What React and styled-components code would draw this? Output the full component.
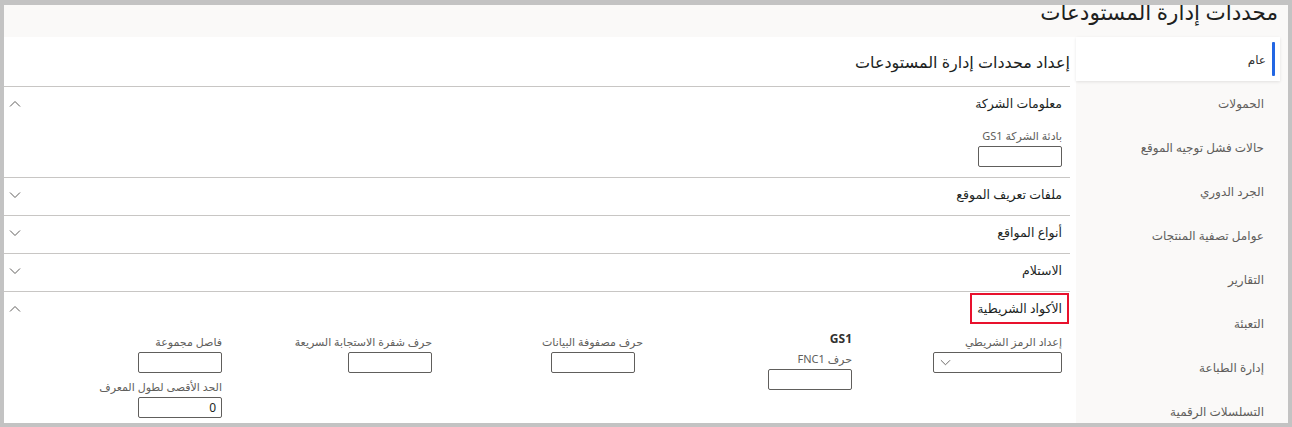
import React from 'react';
import styled, { createGlobalStyle } from 'styled-components';

const Global = createGlobalStyle`
  html, body { margin: 0; padding: 0; }
  body {
    font-family: "Noto Sans", "DejaVu Sans", sans-serif;
    background: #c3c3c3;
  }
`;

const Frame = styled.div`
  box-sizing: border-box;
  width: 1292px;
  height: 427px;
  border-style: solid;
  border-color: #c3c3c3;
  border-width: 5px 4px 4px 4px;
  overflow: hidden;
  direction: rtl;
  background: #faf9f8;
  display: flex;
  flex-direction: column;
`;

const PageHeader = styled.header`
  height: 32px;
  flex: none;
  padding-right: 10px;
  display: flex;
  align-items: flex-end;
`;

const PageTitle = styled.h1`
  margin: 0 0 14px 0;
  font-size: 21.5px;
  font-weight: 400;
  line-height: 22px;
  color: #201f1e;
  white-space: nowrap;
`;

const Body = styled.div`
  flex: 1;
  min-height: 0;
  display: flex;
`;

const Nav = styled.nav`
  width: 212px;
  flex: none;
  background: #faf9f8;
  display: flex;
  flex-direction: column;
`;

const NavItem = styled.div`
  position: relative;
  height: 44px;
  flex: none;
  display: flex;
  align-items: center;
  padding-right: ${p => (p.$active ? '14px' : '24px')};
  margin-right: ${p => (p.$active ? '8px' : '0')};
  background: ${p => (p.$active ? '#ffffff' : 'transparent')};
  box-shadow: ${p => (p.$active ? '0 1px 3px rgba(0,0,0,0.10)' : 'none')};
  font-size: 12px;
  color: ${p => (p.$active ? '#323130' : '#605e5c')};
  white-space: nowrap;
  &::after {
    content: '';
    display: ${p => (p.$active ? 'block' : 'none')};
    position: absolute;
    right: 5px;
    top: 5px;
    bottom: 5px;
    width: 3px;
    border-radius: 1px;
    background: #2266e3;
  }
`;

const Content = styled.main`
  flex: 1;
  min-width: 0;
  background: #ffffff;
  padding-right: 6px;
  display: flex;
  flex-direction: column;
`;

const ContentTitle = styled.h2`
  margin: 0;
  height: 49px;
  flex: none;
  display: flex;
  align-items: center;
  font-size: 16px;
  font-weight: 400;
  color: #201f1e;
  border-bottom: 1px solid #c8c6c4;
  white-space: nowrap;
`;

const Section = styled.section`
  border-bottom: 1px solid #c8c6c4;
  flex: none;
`;

const SectionHeader = styled.div`
  box-sizing: border-box;
  height: 37px;
  display: flex;
  align-items: center;
  justify-content: space-between;
  padding: 0 8px 4px 5px;
`;

const SectionTitle = styled.span`
  font-size: 12.5px;
  font-weight: 400;
  color: #201f1e;
  white-space: nowrap;
  outline: ${p => (p.$marked ? '2px solid #e8112d' : 'none')};
  outline-offset: ${p => (p.$marked ? '5px' : '0')};
`;

const ChevronBox = styled.span`
  display: flex;
  align-items: center;
  width: 12px;
  height: 12px;
`;

const Fields = styled.div`
  display: grid;
  grid-template-columns: repeat(5, 210px);
  align-items: start;
  padding: ${p => p.$pad || '0 8px 12px 0'};
`;

const Field = styled.div`
  display: flex;
  flex-direction: column;
  align-items: ${p => (p.$center ? 'center' : 'flex-start')};
  width: ${p => (p.$center ? '99px' : 'auto')};
`;

const Stack = styled.div`
  display: flex;
  flex-direction: column;
  align-items: flex-start;
  gap: 6px;
`;

const Group = styled.div`
  font-size: 12px;
  font-weight: 700;
  color: #323130;
  line-height: 16px;
  margin-top: -3px;
  margin-bottom: 4px;
`;

const Label = styled.label`
  font-size: 11px;
  color: #605e5c;
  line-height: 16px;
  height: 16px;
  margin-bottom: 2px;
  white-space: nowrap;
`;

const Input = styled.div`
  box-sizing: border-box;
  width: 84px;
  height: 21px;
  border: 1px solid #605e5c;
  border-radius: 2px;
  background: #fff;
  display: flex;
  align-items: center;
  padding: 0 5px;
  font-size: 12px;
  color: #201f1e;
`;

const Select = styled(Input)`
  width: 129px;
  justify-content: flex-end;
  padding: 0 6px;
`;

const Chevron = ({ up, size = 12, color = '#605e5c' }) => (
  <svg width={size} height={size} viewBox="0 0 12 12" fill="none">
    <path
      d={up ? 'M1 8.5 L6 3.5 L11 8.5' : 'M1 3.5 L6 8.5 L11 3.5'}
      stroke={color}
      strokeWidth="1"
    />
  </svg>
);

const navItems = [
  'الحمولات',
  'حالات فشل توجيه الموقع',
  'الجرد الدوري',
  'عوامل تصفية المنتجات',
  'التقارير',
  'التعبئة',
  'إدارة الطباعة',
  'التسلسلات الرقمية',
];

const collapsed = ['ملفات تعريف الموقع', 'أنواع المواقع', 'الاستلام'];

export default function App() {
  return (
    <>
      <Global />
      <Frame>
        <PageHeader>
          <PageTitle>محددات إدارة المستودعات</PageTitle>
        </PageHeader>
        <Body>
          <Nav>
            <NavItem $active>عام</NavItem>
            {navItems.map(n => (
              <NavItem key={n}>{n}</NavItem>
            ))}
          </Nav>
          <Content>
            <ContentTitle>إعداد محددات إدارة المستودعات</ContentTitle>

            <Section>
              <SectionHeader>
                <SectionTitle>معلومات الشركة</SectionTitle>
                <ChevronBox><Chevron up /></ChevronBox>
              </SectionHeader>
              <Fields $pad="4px 8px 10px 0">
                <Field>
                  <Label>بادئة الشركة GS1</Label>
                  <Input />
                </Field>
              </Fields>
            </Section>

            {collapsed.map(c => (
              <Section key={c}>
                <SectionHeader>
                  <SectionTitle>{c}</SectionTitle>
                  <ChevronBox><Chevron /></ChevronBox>
                </SectionHeader>
              </Section>
            ))}

            <Section>
              <SectionHeader>
                <SectionTitle $marked>الأكواد الشريطية</SectionTitle>
                <ChevronBox><Chevron up /></ChevronBox>
              </SectionHeader>
              <Fields $pad="5px 8px 12px 0">
                <Field>
                  <Label>إعداد الرمز الشريطي</Label>
                  <Select>
                    <Chevron size={11} />
                  </Select>
                </Field>
                <Field>
                  <Group>GS1</Group>
                  <Label>حرف FNC1</Label>
                  <Input />
                </Field>
                <Field $center>
                  <Label>حرف مصفوفة البيانات</Label>
                  <Input />
                </Field>
                <Field>
                  <Label>حرف شفرة الاستجابة السريعة</Label>
                  <Input />
                </Field>
                <Stack>
                  <Field>
                    <Label>فاصل مجموعة</Label>
                    <Input />
                  </Field>
                  <Field>
                    <Label>الحد الأقصى لطول المعرف</Label>
                    <Input>0</Input>
                  </Field>
                </Stack>
              </Fields>
            </Section>
          </Content>
        </Body>
      </Frame>
    </>
  );
}
